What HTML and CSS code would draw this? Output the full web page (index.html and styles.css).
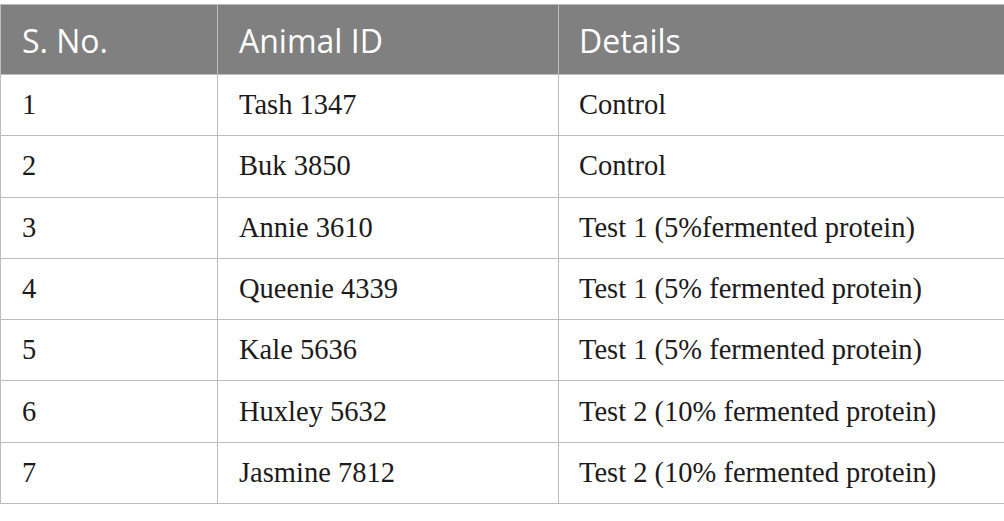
FILE: index.html
```html
<!DOCTYPE html>
<html>
<head>
<meta charset="utf-8">
<link rel="stylesheet" href="styles.css">
</head>
<body>
<table class="data">
  <colgroup>
    <col class="c1"><col class="c2"><col class="c3">
  </colgroup>
  <thead>
    <tr><th>S. No.</th><th>Animal ID</th><th>Details</th></tr>
  </thead>
  <tbody>
    <tr><td>1</td><td>Tash 1347</td><td>Control</td></tr>
    <tr><td>2</td><td>Buk 3850</td><td>Control</td></tr>
    <tr><td>3</td><td>Annie 3610</td><td>Test 1 (5%fermented protein)</td></tr>
    <tr><td>4</td><td>Queenie 4339</td><td>Test 1 (5% fermented protein)</td></tr>
    <tr><td>5</td><td>Kale 5636</td><td>Test 1 (5% fermented protein)</td></tr>
    <tr><td>6</td><td>Huxley 5632</td><td>Test 2 (10% fermented protein)</td></tr>
    <tr><td>7</td><td>Jasmine 7812</td><td>Test 2 (10% fermented protein)</td></tr>
  </tbody>
</table>
</body>
</html>
```
FILE: styles.css
```css
html, body {
  margin: 0;
  padding: 0;
  background: #ffffff;
}
body {
  padding-top: 4px;
}
.data {
  width: 1004px;
  border-collapse: collapse;
  table-layout: fixed;
}
.c1 { width: 217px; }
.c2 { width: 341px; }
.c3 { width: 446px; }
.data th,
.data td {
  border: 1px solid #bdbdbd;
  text-align: left;
  padding: 0 0 0 21px;
  white-space: nowrap;
}
.data th {
  background: #7f807f;
  color: #ffffff;
  font-family: "Open Sans", sans-serif;
  font-weight: 400;
  font-size: 32px;
  height: 67px;
  padding-top: 2px;
}
.data td {
  color: #1c1a1b;
  font-family: "Liberation Serif", serif;
  font-size: 28.5px;
  height: 60.3px;
}
.data td + td {
  padding-left: 21px;
}
.data td:last-child,
.data th:last-child {
  padding-left: 20px;
}
```
